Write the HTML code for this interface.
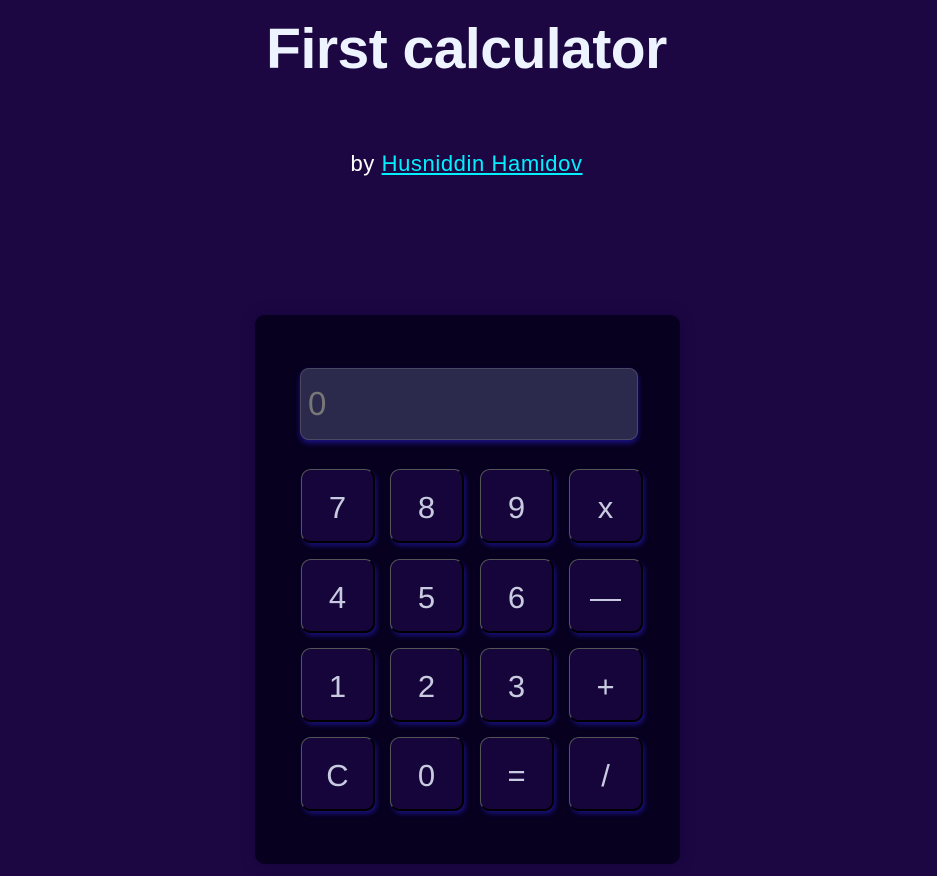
<!DOCTYPE html>
<html><head><style>
body{margin:0;background:#1c0742;width:937px;height:876px;overflow:hidden;font-family:"Liberation Sans",sans-serif;}
h1{margin:0;position:absolute;top:13px;left:0;width:933px;text-align:center;color:#eef4ff;font-size:57px;font-weight:bold;letter-spacing:-0.5px;line-height:72px;}
.by{position:absolute;top:151px;left:0;width:933px;text-align:center;color:#fff;font-size:22px;letter-spacing:0.6px;}
.by a{color:#00f0ff;text-decoration:underline;}
.calc{position:absolute;left:255px;top:315px;width:425px;height:549px;background:#07001f;border-radius:10px;box-shadow:0 0 12px rgba(20,0,60,.8);}
.disp{position:absolute;left:45px;top:53px;background:#2b2a4c;border:1px solid #4a4860;border-radius:9px;box-shadow:0 3px 6px rgba(40,30,200,.6);color:#777;font-size:33px;line-height:70px;padding-left:7px;box-sizing:border-box;width:338px;height:72px;}
.b{position:absolute;width:74px;height:74px;box-sizing:border-box;background:#15053a;border:1px solid #555;border-right:2px solid #000;border-bottom:2px solid #000;border-radius:10px;box-shadow:2px 3px 5px rgba(40,30,200,.5);color:#c8cbe0;font-size:31px;text-align:center;line-height:76px;}
</style></head><body>
<h1>First calculator</h1>
<div class="by">by <a>Husniddin Hamidov</a></div>
<div class="calc">
<div class="disp">0</div>
<div class="b" style="left:46px;top:154px">7</div>
<div class="b" style="left:135px;top:154px">8</div>
<div class="b" style="left:225px;top:154px">9</div>
<div class="b" style="left:314px;top:154px">x</div>
<div class="b" style="left:46px;top:244px">4</div>
<div class="b" style="left:135px;top:244px">5</div>
<div class="b" style="left:225px;top:244px">6</div>
<div class="b" style="left:314px;top:244px">—</div>
<div class="b" style="left:46px;top:333px">1</div>
<div class="b" style="left:135px;top:333px">2</div>
<div class="b" style="left:225px;top:333px">3</div>
<div class="b" style="left:314px;top:333px">+</div>
<div class="b" style="left:46px;top:422px">C</div>
<div class="b" style="left:135px;top:422px">0</div>
<div class="b" style="left:225px;top:422px">=</div>
<div class="b" style="left:314px;top:422px">/</div>
</div>
</body></html>
